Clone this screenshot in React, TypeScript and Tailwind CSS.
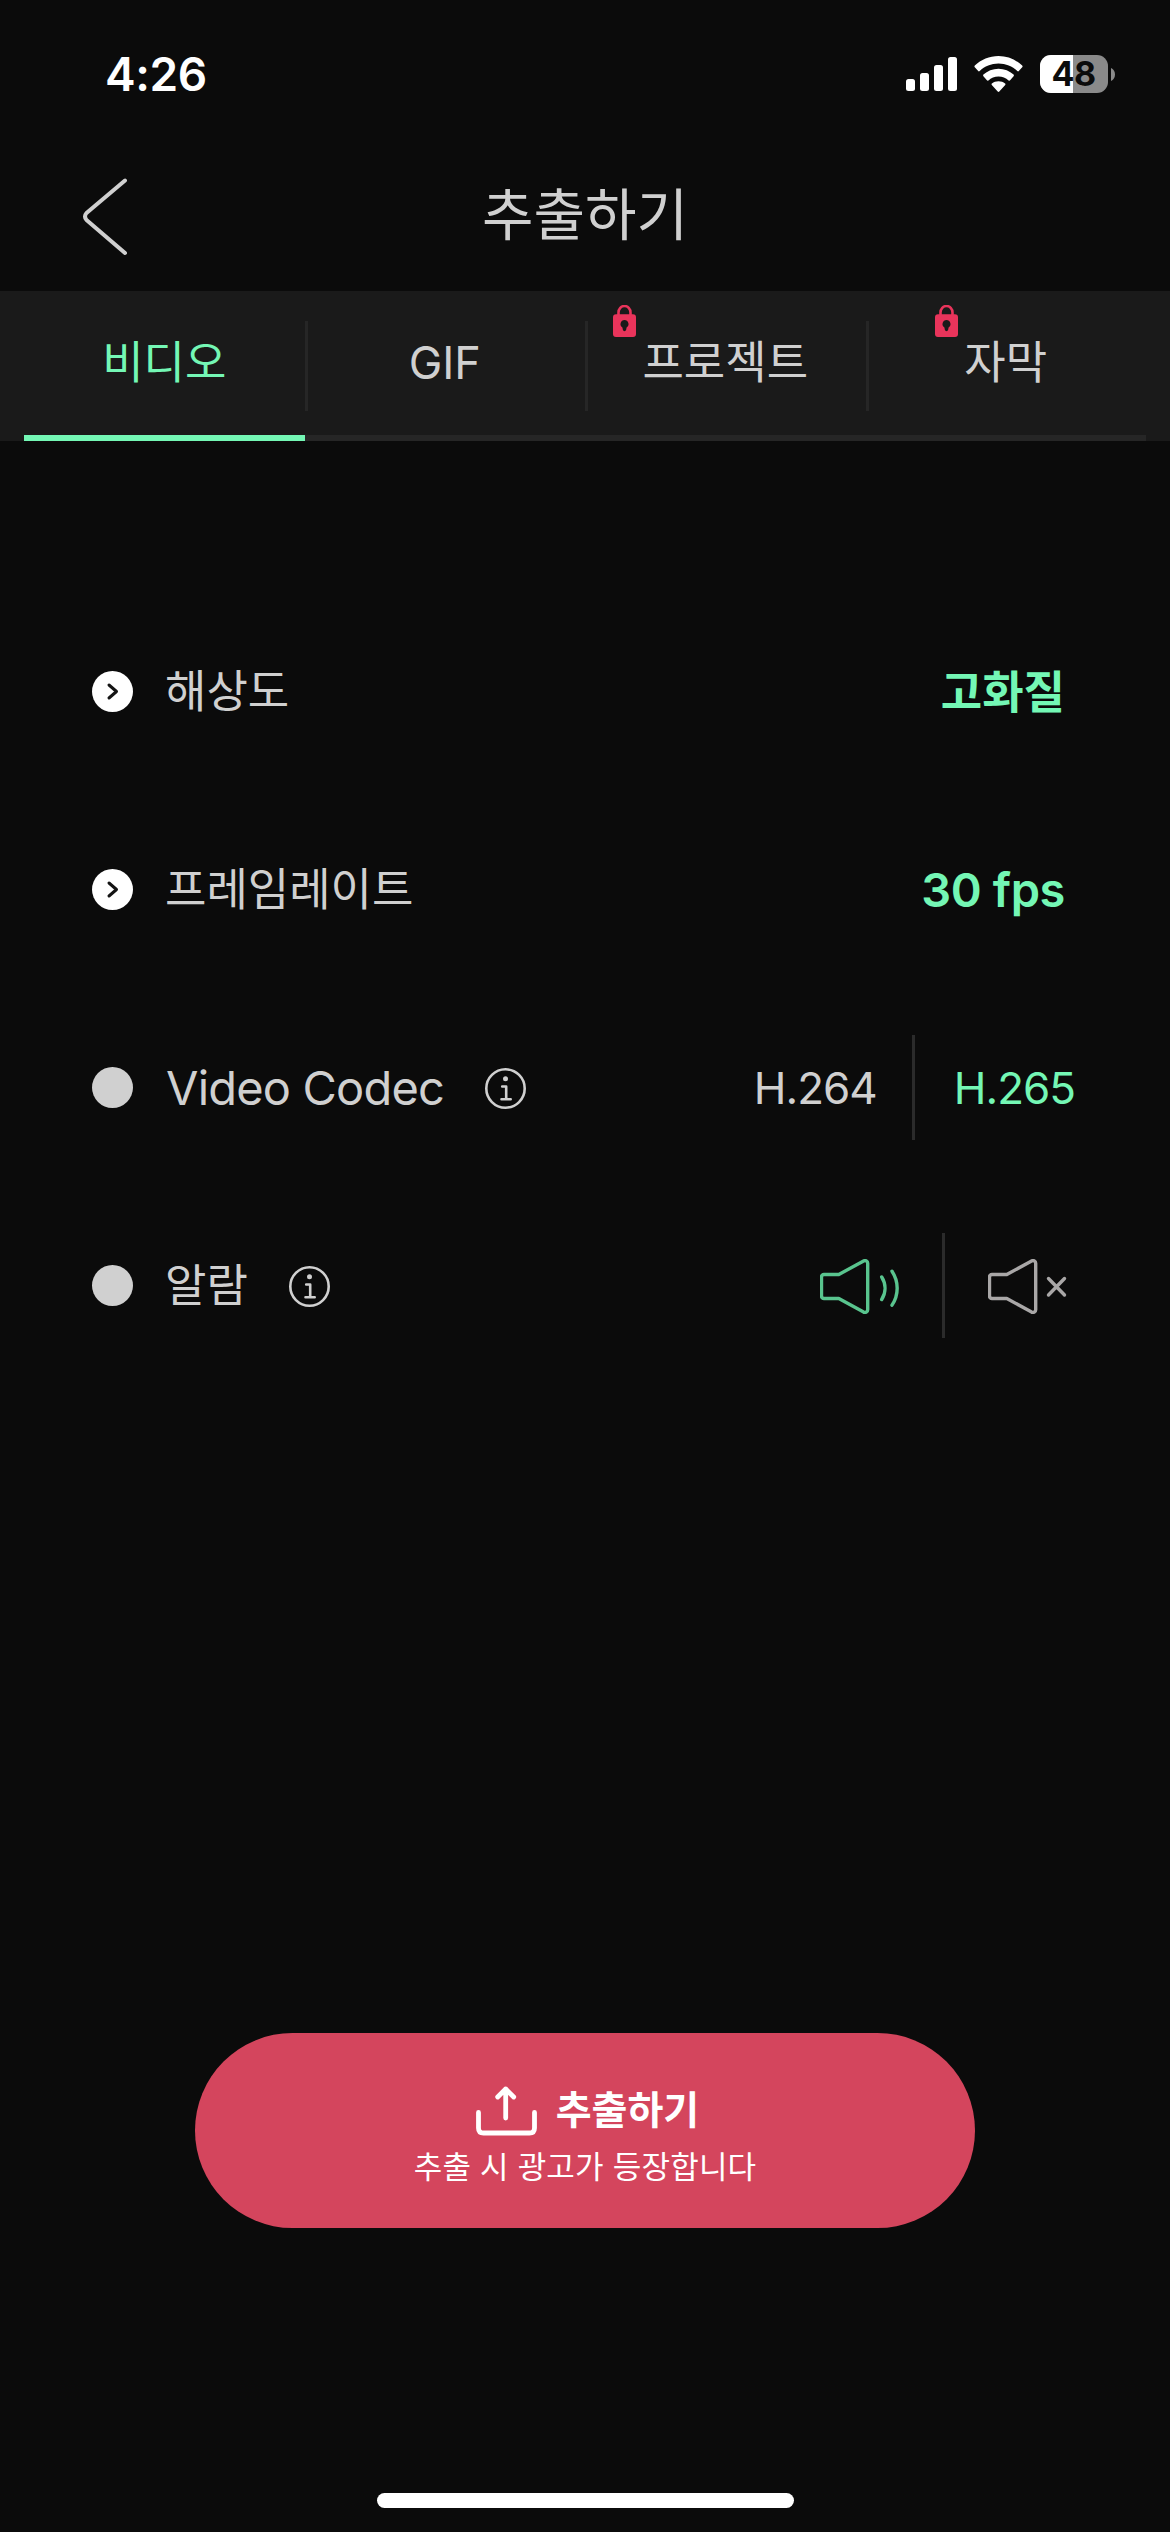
import React, { useState } from "react";
import clsx from "clsx";

type TabId = "video" | "gif" | "project" | "subtitle";

interface Tab {
    id: TabId;
    label: string;
    locked?: boolean;
}

const TABS: Tab[] = [
    { id: "video", label: "비디오" },
    { id: "gif", label: "GIF" },
    { id: "project", label: "프로젝트", locked: true },
    { id: "subtitle", label: "자막", locked: true },
];

const SignalIcon = () => (
    <svg width="51" height="34" viewBox="0 0 51 34" fill="white">
        <rect x="0" y="22" width="9" height="12" rx="2.5" />
        <rect x="14" y="16" width="9" height="18" rx="2.5" />
        <rect x="28" y="8" width="9" height="26" rx="2.5" />
        <rect x="42" y="0" width="9" height="34" rx="2.5" />
    </svg>
);

const WifiIcon = () => (
    <svg width="49" height="36" viewBox="0 0 49 36" fill="white">
        <path d="M24.5 0C15.4 0 7 3.6.8 9.6c-.5.5-.5 1.1 0 1.6l3.4 3.9c.4.5 1 .5 1.5 0C10.6 10.4 17.2 7.6 24.5 7.6s13.9 2.8 18.8 7.5c.5.5 1.1.5 1.5 0l3.4-3.9c.5-.5.5-1.1 0-1.6C42 3.6 33.6 0 24.5 0z" />
        <path d="M24.5 12.7c-5.8 0-11.1 2.2-15.1 5.9-.5.5-.5 1.1 0 1.6l3.5 4.1c.4.5 1 .5 1.5.1 2.7-2.5 6.2-4 10.1-4s7.4 1.5 10.1 4c.5.4 1.1.4 1.5-.1l3.5-4.1c.5-.5.5-1.1 0-1.6-4-3.7-9.3-5.9-15.1-5.9z" />
        <path d="M24.5 25.2c-2.5 0-4.8.8-6.6 2.2-.5.4-.5 1-.1 1.5l5.9 6.7c.5.5 1.1.5 1.6 0l5.9-6.7c.4-.5.4-1.1-.1-1.5-1.8-1.4-4.1-2.2-6.6-2.2z" />
    </svg>
);

const Battery = ({ level }: { level: number }) => (
    <div className="flex items-center gap-[3px]">
        <div className="relative h-[38px] w-[68px]">
            <div className="h-full overflow-hidden rounded-[11px] bg-[#8a8a8a]">
                <div className="h-full bg-white" style={{ width: `${level}%` }} />
            </div>
            <span className="absolute inset-0 right-[1px] text-center text-[34px] leading-[38px] font-bold tracking-[-0.5px] text-[#0b0b0b]">{level}</span>
        </div>
        <svg width="4" height="13" viewBox="0 0 4 13" fill="#8a8a8a">
            <path d="M0 0c2.4 1 4 3.5 4 6.5S2.4 12 0 13z" />
        </svg>
    </div>
);

const LockIcon = () => (
    <svg width="23" height="32" viewBox="0 0 23 32">
        <path d="M5.5 11V7.500a6 6.500 0 0 1 12 0V11" fill="none" stroke="#e9345b" strokeWidth="2.6" />
        <path
            fillRule="evenodd"
            fill="#e9345b"
            d="M3 9.300h17a3 3 0 0 1 3 3V29a3 3 0 0 1-3 3H3a3 3 0 0 1-3-3V12.300a3 3 0 0 1 3-3zM11.500 15a4 4 0 0 0-2.100 7.400l.5 2.600a1.700 1.700 0 0 0 3.200 0l.5-2.600A4 4 0 0 0 11.500 15z"
        />
    </svg>
);

const InfoIcon = () => (
    <svg width="41" height="41" viewBox="0 0 41 41" fill="none" stroke="#d0d0d0" strokeWidth="2.6" strokeLinecap="round" strokeLinejoin="round">
        <circle cx="20.5" cy="20.5" r="19.2" />
        <circle cx="20.5" cy="10.8" r="2.5" fill="#d0d0d0" stroke="none" />
        <path d="M17.2 18.500h4V31M16.500 31.200h9.200" />
    </svg>
);

const SpeakerShape = () => <path d="M4 15.500h14.800L43.600 1.900c2-.9 4.100.2 4.100 2.300v46.600c0 2.100-2.100 3.200-4.100 2.300L18.800 39.500H4c-1.500 0-2.500-1-2.500-2.500V18c0-1.500 1-2.500 2.500-2.500z" />;

const SoundOnIcon = () => (
    <svg width="79" height="55" viewBox="0 0 79 55" fill="none" stroke="#59c48e" strokeWidth="3.4" strokeLinecap="round" strokeLinejoin="round">
        <SpeakerShape />
        <path d="M61.700 18c4.400 7 4.400 15.500 0 22.500M72 12.200c6.900 10.500 6.900 23.300 0 34" />
    </svg>
);

const SoundOffIcon = () => (
    <svg width="79" height="55" viewBox="0 0 79 55" fill="none" stroke="#a9a7a7" strokeWidth="3.4" strokeLinecap="round" strokeLinejoin="round">
        <SpeakerShape />
        <path d="M60.500 19.500l16 16.500M76.500 19.500l-16 16.500" />
    </svg>
);

const ExportIcon = () => (
    <svg width="61" height="50" viewBox="0 0 61 50" fill="none" stroke="white" strokeWidth="4.8" strokeLinecap="round" strokeLinejoin="round">
        <path d="M2.500 26.500v15.500q0 5 5 5h46q5 0 5-5V26.500" />
        <path d="M29.700 32V3M21.700 11l8-8 8 8" />
    </svg>
);

const Bullet = ({ arrow = false }: { arrow?: boolean }) => (
    <svg width="41" height="41" viewBox="0 0 41 41">
        <circle cx="20.5" cy="20.5" r="20.5" fill={arrow ? "#ffffff" : "#d0d0d0"} />
        {arrow && <path d="M17 14l7.500 6.500L17 27" fill="none" stroke="#141414" strokeWidth="3" strokeLinecap="round" strokeLinejoin="round" />}
    </svg>
);

interface OptionRowProps {
    label: string;
    arrow?: boolean;
    info?: boolean;
    latin?: boolean;
    children: React.ReactNode;
}

const OptionRow: React.FC<OptionRowProps> = ({ label, arrow, info, latin, children }) => (
    <div className="flex h-[198px] items-center justify-between">
        <div className="flex items-center pb-px">
            <Bullet arrow={arrow} />
            <span className={clsx("leading-none whitespace-nowrap", latin ? "ml-[33px] text-[47px] tracking-[-0.8px]" : "ml-[32px] text-[45px]")}>{label}</span>
            {info && (
                <button className="mt-[2px] ml-[41px]">
                    <InfoIcon />
                </button>
            )}
        </div>
        <div className="flex items-center">{children}</div>
    </div>
);

const Divider = () => <div className="mb-px h-[105px] w-[3px] bg-[#2b2b2b]" />;

const App: React.FC = () => {
    const [activeTab, setActiveTab] = useState<TabId>("video");
    const [codec, setCodec] = useState("H.265");

    return (
        <div className="flex h-[2532px] w-[1170px] flex-col bg-[#0b0b0b] font-['Inter','Noto_Sans_CJK_KR',sans-serif] text-[#d0d0d0]">
            {/* Status bar */}
            <div className="flex h-[148px] items-center justify-between pr-[55px] pl-[105px] text-white">
                <span className="text-[46px] leading-none font-semibold tracking-[-0.4px]">4:26</span>
                <div className="flex items-center gap-[17px]">
                    <SignalIcon />
                    <WifiIcon />
                    <Battery level={48} />
                </div>
            </div>

            {/* Header */}
            <header className="grid h-[143px] grid-cols-[1fr_auto_1fr] items-center px-[82px] pb-[6px]">
                <button className="w-[46px]">
                    <svg width="46" height="78" viewBox="0 0 46 78" fill="none" stroke="#d0d0d0" strokeWidth="4" strokeLinecap="round" strokeLinejoin="round">
                        <path d="M43 2.500L4.500 35q-3 3.500 0 7L43 75" />
                    </svg>
                </button>
                <h1 className="pb-[4px] text-[56px] leading-none">추출하기</h1>
            </header>

            {/* Export type tabs */}
            <nav className="grid h-[150px] grid-cols-4 bg-[#1a1a1a] px-[24px]">
                {TABS.map((tab, i) => (
                    <button
                        key={tab.id}
                        onClick={() => setActiveTab(tab.id)}
                        className={clsx("flex items-center justify-center border-b-[6px]", activeTab === tab.id ? "border-[#74f7b5] text-[#74f7b5]" : "border-[#262626]")}
                    >
                        {i > 0 && <span className="mt-[6px] -mr-[3px] h-[90px] w-[3px] bg-[#262626]" />}
                        <span className="flex flex-1 justify-center">
                            <span className="relative pb-px text-[45px] leading-none">
                                {tab.label}
                                {tab.locked && (
                                    <span className="absolute -top-[35px] -left-[29px]">
                                        <LockIcon />
                                    </span>
                                )}
                            </span>
                        </span>
                    </button>
                ))}
            </nav>

            {/* Export options */}
            <main className="mt-[152px] flex flex-1 flex-col pr-[96px] pl-[92px]">
                <OptionRow label="해상도" arrow>
                    <span className="mr-[9px] text-[45px] leading-none font-bold text-[#74f7b5]">고화질</span>
                </OptionRow>
                <OptionRow label="프레임레이트" arrow>
                    <span className="mr-[9px] pb-px text-[47px] leading-none font-semibold tracking-[-0.4px] text-[#74f7b5]">30 fps</span>
                </OptionRow>
                <OptionRow label="Video Codec" info latin>
                    <button onClick={() => setCodec("H.264")} className={clsx("mr-[35px] text-[44px] leading-none tracking-[-1px]", codec === "H.264" && "text-[#74f7b5]")}>
                        H.264
                    </button>
                    <Divider />
                    <button onClick={() => setCodec("H.265")} className={clsx("-mr-px ml-[39px] text-[44px] leading-none tracking-[-1px]", codec === "H.265" && "text-[#74f7b5]")}>
                        H.265
                    </button>
                </OptionRow>
                <OptionRow label="알람" info>
                    <button className="mr-[43px]">
                        <SoundOnIcon />
                    </button>
                    <Divider />
                    <button className="mr-[7px] ml-[43px]">
                        <SoundOffIcon />
                    </button>
                </OptionRow>
            </main>

            {/* Export button */}
            <div className="flex justify-center">
                <button className="flex h-[195px] w-[780px] flex-col items-center justify-center rounded-full bg-[#d4455d] pt-[7px] text-white">
                    <span className="flex items-center gap-[19px] pl-[5px]">
                        <ExportIcon />
                        <span className="-mt-[3px] text-[39px] leading-none font-bold">추출하기</span>
                    </span>
                    <span className="mt-[15px] text-[31px] leading-none tracking-[0.2px]">추출 시 광고가 등장합니다</span>
                </button>
            </div>

            {/* Home indicator */}
            <div className="mt-[265px] mb-[24px] flex justify-center">
                <div className="h-[15px] w-[417px] rounded-full bg-white" />
            </div>
        </div>
    );
};

export default App;
